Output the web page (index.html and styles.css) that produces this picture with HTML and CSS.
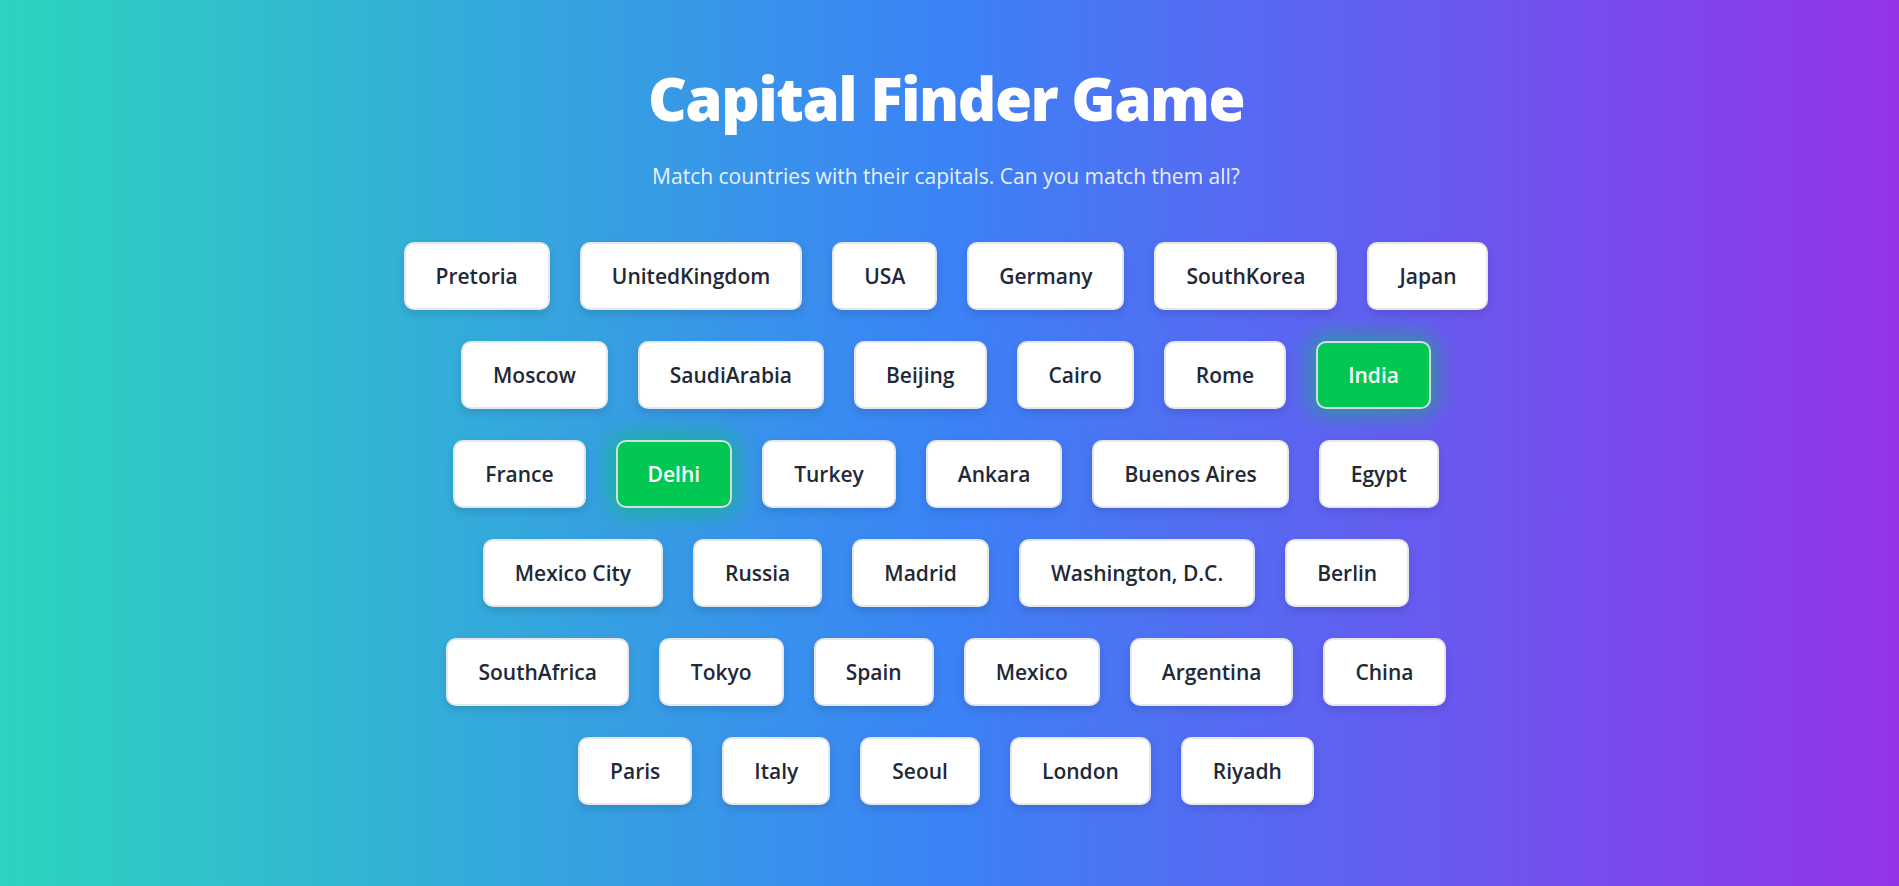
FILE: index.html
```html
<!DOCTYPE html>
<html lang="en">
<head>
<meta charset="utf-8">
<title>Capital Finder Game</title>
<link rel="stylesheet" href="styles.css">
</head>
<body>
<main class="page">
  <h1 class="title">Capital Finder Game</h1>
  <p class="subtitle">Match countries with their capitals. Can you match them all?</p>
  <div class="board">
    <div class="row">
      <button class="tile">Pretoria</button>
      <button class="tile">UnitedKingdom</button>
      <button class="tile">USA</button>
      <button class="tile">Germany</button>
      <button class="tile">SouthKorea</button>
      <button class="tile">Japan</button>
    </div>
    <div class="row">
      <button class="tile">Moscow</button>
      <button class="tile">SaudiArabia</button>
      <button class="tile">Beijing</button>
      <button class="tile">Cairo</button>
      <button class="tile">Rome</button>
      <button class="tile tile-selected">India</button>
    </div>
    <div class="row">
      <button class="tile">France</button>
      <button class="tile tile-selected">Delhi</button>
      <button class="tile">Turkey</button>
      <button class="tile">Ankara</button>
      <button class="tile">Buenos Aires</button>
      <button class="tile">Egypt</button>
    </div>
    <div class="row">
      <button class="tile">Mexico City</button>
      <button class="tile">Russia</button>
      <button class="tile">Madrid</button>
      <button class="tile">Washington, D.C.</button>
      <button class="tile">Berlin</button>
    </div>
    <div class="row">
      <button class="tile">SouthAfrica</button>
      <button class="tile">Tokyo</button>
      <button class="tile">Spain</button>
      <button class="tile">Mexico</button>
      <button class="tile">Argentina</button>
      <button class="tile">China</button>
    </div>
    <div class="row">
      <button class="tile">Paris</button>
      <button class="tile">Italy</button>
      <button class="tile">Seoul</button>
      <button class="tile">London</button>
      <button class="tile">Riyadh</button>
    </div>
  </div>
</main>
</body>
</html>
```
FILE: styles.css
```css
* {
  box-sizing: border-box;
}

html, body {
  margin: 0;
  padding: 0;
}

body {
  min-height: 100vh;
  background: linear-gradient(to right, #2dd4bf 0%, #3b82f6 50%, #9333ea 100%);
  font-family: "Open Sans", "Noto Sans", sans-serif;
  color: #1f2937;
}

.page {
  display: flex;
  flex-direction: column;
  align-items: center;
  padding: 65px 23px 40px 16px;
}

.title {
  margin: 0;
  font-size: 60px;
  line-height: 67px;
  font-weight: 800;
  color: #ffffff;
  letter-spacing: -1.5px;
}

.subtitle {
  margin: 30px 0 0;
  font-size: 21px;
  line-height: 28px;
  color: rgba(255, 255, 255, 0.9);
}

.board {
  margin-top: 52px;
  display: flex;
  flex-direction: column;
  align-items: center;
  gap: 31px;
}

.row {
  display: flex;
  justify-content: center;
  gap: 30px;
}

.tile {
  font-family: inherit;
  font-size: 21px;
  line-height: 32px;
  font-weight: 600;
  color: #1f2937;
  background: #ffffff;
  border: 2px solid #e5e7eb;
  border-radius: 10px;
  padding: 16px 30px;
  box-shadow: 0 4px 8px rgba(0, 0, 0, 0.12);
  cursor: pointer;
  white-space: nowrap;
}

.tile-selected {
  background: #00c853;
  color: #ffffff;
  border-color: #d5dde3;
  box-shadow: 0 0 22px 5px rgba(0, 200, 83, 0.55);
}
```
